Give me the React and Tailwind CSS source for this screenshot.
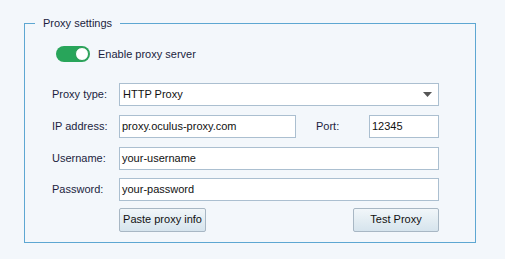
import { useState } from 'react';

const font = { fontFamily: '"Liberation Sans", Arial, sans-serif' };

function Field({ value, className = '' }) {
  return (
    <div className={`flex h-[23px] items-center border border-[#abbfd0] bg-white pl-[2px] text-[11px] text-[#111] ${className}`}>
      {value}
    </div>
  );
}

function Row({ label, className = '', children }) {
  return (
    <div className={`flex items-center ${className}`}>
      <span className="w-[67px] shrink-0 text-[11px] text-[#1b1e3e]">{label}</span>
      {children}
    </div>
  );
}

export default function App() {
  const [enabled, setEnabled] = useState(true);

  return (
    <div className="h-[259px] w-[505px] overflow-hidden bg-[#f3f7fb] pt-[16px] pl-[24px]" style={font}>
      <fieldset className="m-0 h-[227px] w-[452px] border border-[#5da7d2] p-0">
        <legend className="ml-[10px] px-[8px] text-[11px] leading-[14px] text-[#1b1e3e]">Proxy settings</legend>
        <div className="flex flex-col pl-[27px] pt-[16px]">
          <div className="ml-[4px] flex items-center gap-[8px]">
            <button
              type="button"
              onClick={() => setEnabled(!enabled)}
              className={`flex h-[16px] w-[34px] items-center rounded-full px-[1px] ${enabled ? 'justify-end bg-[#28a55a]' : 'justify-start bg-[#b9c3cc]'}`}
            >
              <span className="block h-[14px] w-[14px] rounded-full border border-[#2b9a55] bg-white" />
            </button>
            <span className="text-[11px] text-[#1b1e3e]">Enable proxy server</span>
          </div>

          <div className="mt-[20px] flex flex-col">
            <Row label="Proxy type:">
              <div className="flex h-[23px] w-[320px] items-center justify-between border border-[#abbfd0] bg-white pl-[3px] pr-[6px] text-[11px] text-[#111]">
                <span>HTTP Proxy</span>
                <svg width="9" height="5" viewBox="0 0 9 5"><path d="M0 0h9L4.5 5z" fill="#555" /></svg>
              </div>
            </Row>
            <Row label="IP address:" className="mt-[9px]">
              <Field value="proxy.oculus-proxy.com" className="w-[177px]" />
              <span className="ml-[20px] w-[53px] text-[11px] text-[#1b1e3e]">Port:</span>
              <Field value="12345" className="w-[70px]" />
            </Row>
            <Row label="Username:" className="mt-[9px]">
              <Field value="your-username" className="w-[320px]" />
            </Row>
            <Row label="Password:" className="mt-[8px]">
              <Field value="your-password" className="w-[320px]" />
            </Row>
          </div>

          <div className="mt-[7px] flex w-[387px] justify-between pl-[67px]">
            <button type="button" className="h-[24px] w-[87px] rounded-[2px] border border-[#a8b7c4] bg-gradient-to-b from-[#f1f6f9] to-[#d6e4ed] text-[11px] text-[#111]">
              Paste proxy info
            </button>
            <button type="button" className="h-[24px] w-[86px] rounded-[2px] border border-[#a8b7c4] bg-gradient-to-b from-[#f1f6f9] to-[#d6e4ed] text-[11px] text-[#111]">
              Test Proxy
            </button>
          </div>
        </div>
      </fieldset>
    </div>
  );
}
